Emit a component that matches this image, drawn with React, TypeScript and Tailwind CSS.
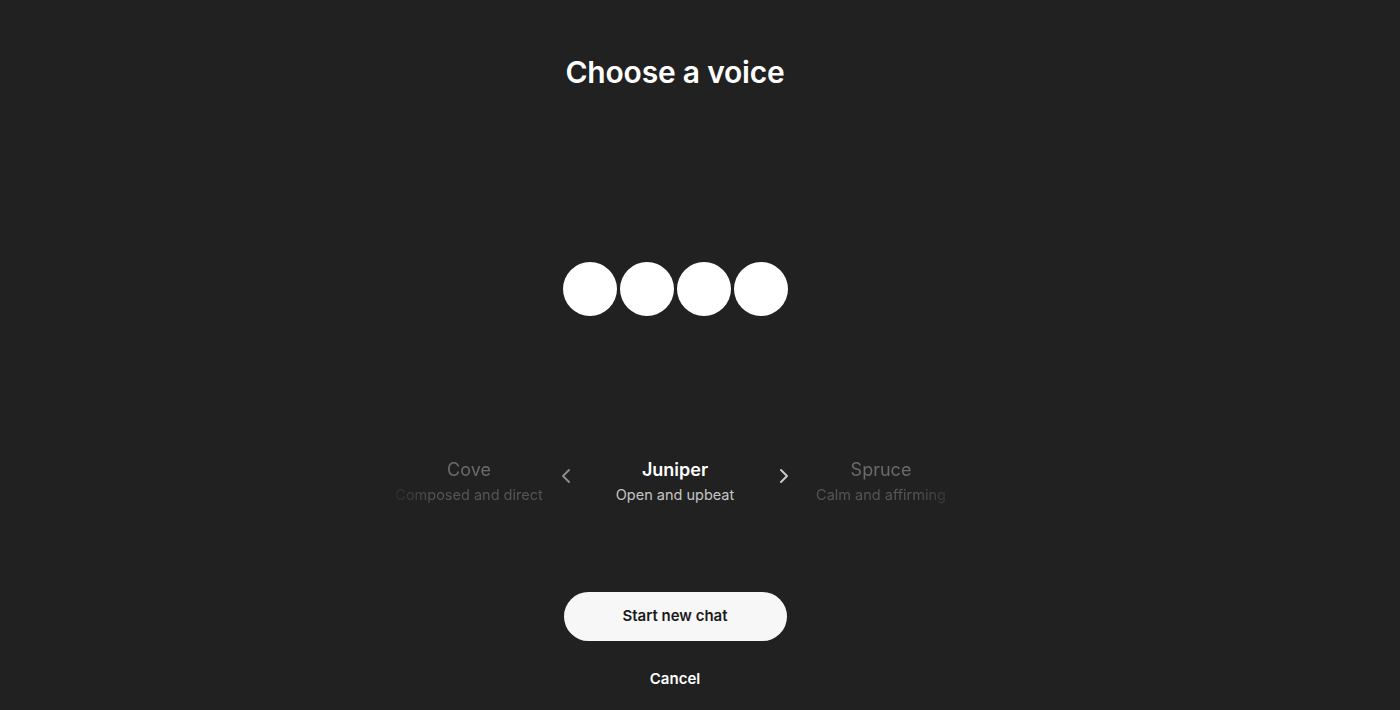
import { ChevronLeft, ChevronRight } from "lucide-react";

const App = () => {
	return (
		<div
			className="w-full h-[710px] bg-[#212121] text-white flex flex-col items-center pr-[50px] overflow-hidden"
			style={{ fontFamily: "Inter, 'Noto Sans', sans-serif" }}
		>
			{/* Title */}
			<h1 className="mt-[52px] text-[30px] leading-[40px] font-semibold tracking-[-0.2px]">
				Choose a voice
			</h1>

			{/* Orb */}
			<div className="mt-[170px] flex items-center gap-[3px]">
				<div className="w-[54px] h-[54px] rounded-full bg-white" />
				<div className="w-[54px] h-[54px] rounded-full bg-white" />
				<div className="w-[54px] h-[54px] rounded-full bg-white" />
				<div className="w-[54px] h-[54px] rounded-full bg-white" />
			</div>

			{/* Voice picker */}
			<div className="mt-[141px] flex items-center">
				<div className="w-[170px] flex flex-col items-center [mask-image:linear-gradient(to_right,transparent_0%,black_30%)]">
					<span className="text-[18px] leading-[26px] text-[#6a6a6a]">Cove</span>
					<span className="text-[14.5px] leading-[23px] text-[#555555] whitespace-nowrap">
						Composed and direct
					</span>
				</div>
				<button className="w-[24px] flex justify-center text-[#8a8a8a] mb-[12px]">
					<ChevronLeft size={24} strokeWidth={2} />
				</button>
				<div className="w-[170px] ml-[12px] flex flex-col items-center">
					<span className="text-[18px] leading-[26px] font-semibold text-white">Juniper</span>
					<span className="text-[14.5px] leading-[23px] text-[#c4c4c4] whitespace-nowrap">
						Open and upbeat
					</span>
				</div>
				<button className="w-[24px] ml-[12px] flex justify-center text-[#c8c8c8] mb-[12px]">
					<ChevronRight size={24} strokeWidth={2} />
				</button>
				<div className="w-[170px] flex flex-col items-center [mask-image:linear-gradient(to_left,transparent_0%,black_30%)]">
					<span className="text-[18px] leading-[26px] text-[#6a6a6a]">Spruce</span>
					<span className="text-[14.5px] leading-[23px] text-[#555555] whitespace-nowrap">
						Calm and affirming
					</span>
				</div>
			</div>

			{/* Actions */}
			<button className="mt-[86px] w-[223px] h-[49px] rounded-full bg-[#f7f7f7] text-[#1a1a1a] text-[15px] font-semibold">
				Start new chat
			</button>
			<button className="mt-[27px] text-[15px] font-semibold text-white">Cancel</button>
		</div>
	);
};

export default App;
